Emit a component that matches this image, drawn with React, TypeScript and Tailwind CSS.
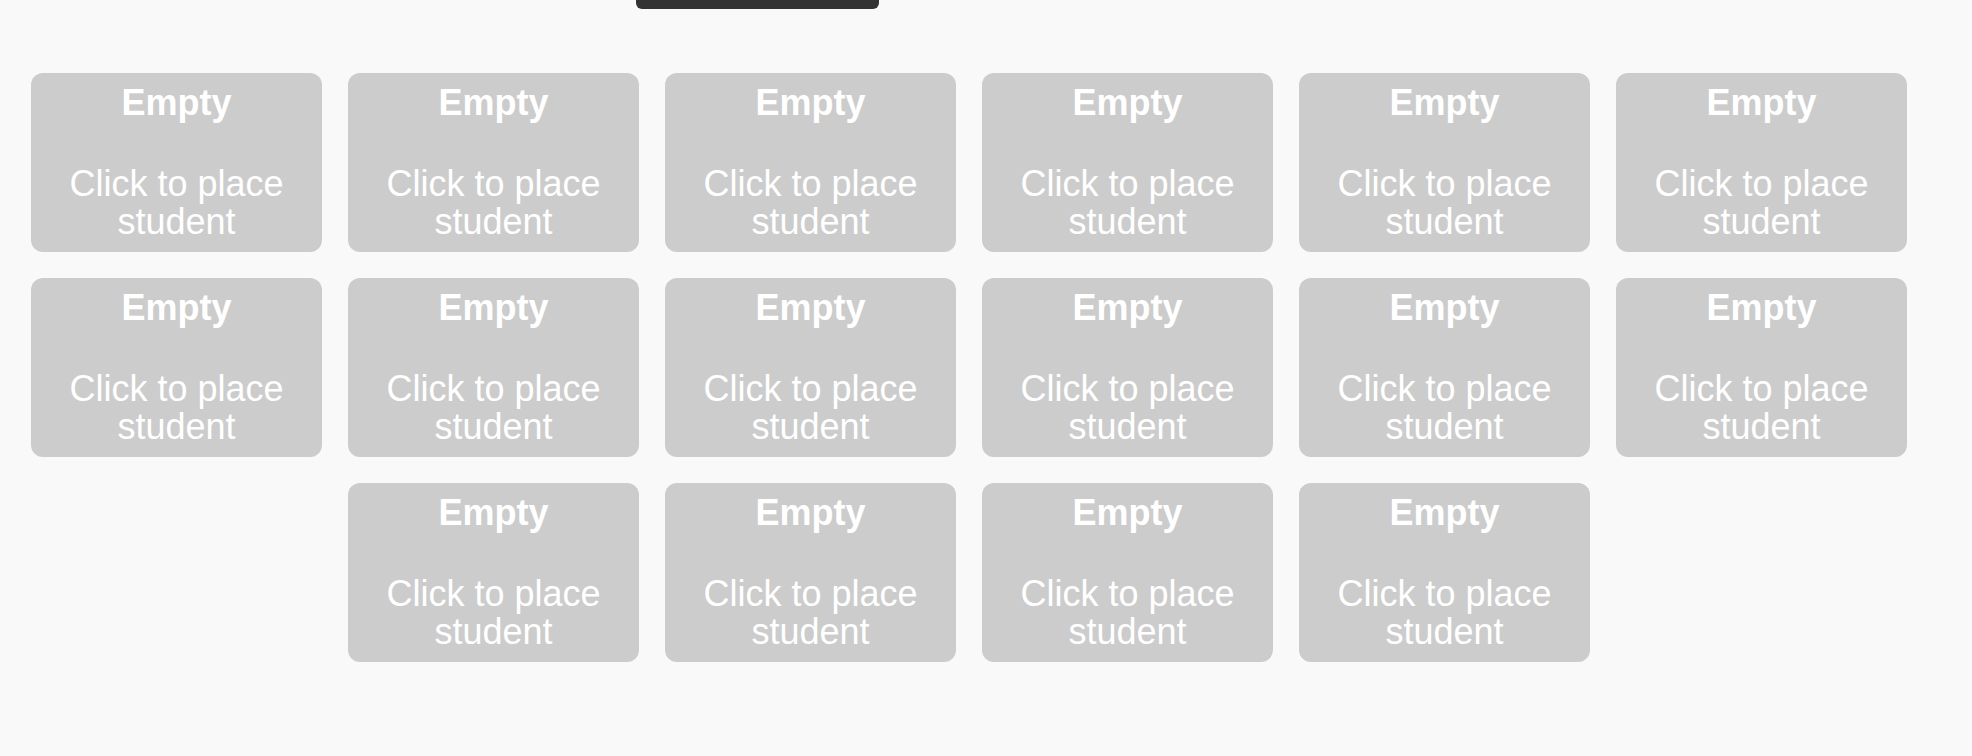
import React from 'react';

const seats = Array.from({ length: 16 }, (_, i) => i);

const SeatCard: React.FC = () => (
    <button className="w-[291px] h-[179px] rounded-[12px] bg-[#cccccc] pt-[10px] px-[10px] text-center text-white text-[36px] leading-[38px] flex flex-col items-center">
        <span className="block font-bold leading-[40px]">Empty</span>
        <span className="block h-[42px]"></span>
        <span className="block">Click to place student</span>
    </button>
);

const App: React.FC = () => {
    return (
        <div className="min-h-screen bg-[#f9f9f9] font-['Liberation_Sans',Arial,sans-serif]">
            {/* Teacher desk peeking from above */}
            <div className="ml-[636px] w-[243px] h-[9px] bg-[#333333] rounded-b-[6px]"></div>

            {/* Seats */}
            <div className="mt-[64px] ml-[31px] w-[1876px] flex flex-wrap justify-center gap-x-[26px] gap-y-[26px]">
                {seats.map(i => (
                    <SeatCard key={i} />
                ))}
            </div>
        </div>
    );
};

export default App;
